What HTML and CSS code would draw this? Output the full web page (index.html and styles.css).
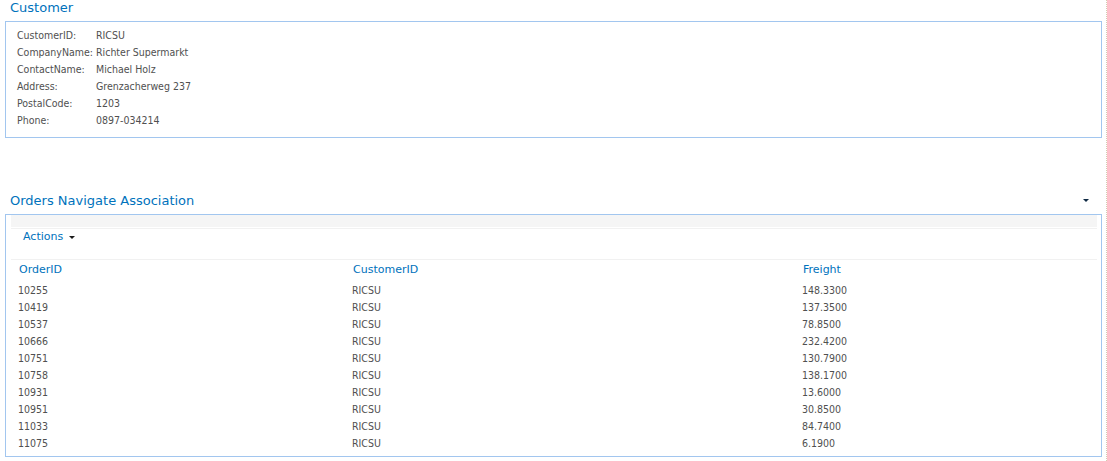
FILE: index.html
```html
<!DOCTYPE html>
<html>
<head>
<meta charset="utf-8">
<link rel="stylesheet" href="styles.css">
</head>
<body>
<div class="page">
  <div class="title">Customer</div>
  <div class="box details">
    <dl class="fields">
      <dt>CustomerID:</dt><dd>RICSU</dd>
      <dt>CompanyName:</dt><dd>Richter Supermarkt</dd>
      <dt>ContactName:</dt><dd>Michael Holz</dd>
      <dt>Address:</dt><dd>Grenzacherweg 237</dd>
      <dt>PostalCode:</dt><dd>1203</dd>
      <dt>Phone:</dt><dd>0897-034214</dd>
    </dl>
  </div>

  <div class="title title-orders">
    <span>Orders Navigate Association</span>
    <span class="caret dark"></span>
  </div>
  <div class="box orders">
    <div class="strip"></div>
    <div class="actions"><span>Actions</span><span class="caret"></span></div>
    <table class="grid">
      <colgroup><col class="c1"><col class="c2"><col class="c3"></colgroup>
      <thead>
        <tr><th>OrderID</th><th>CustomerID</th><th>Freight</th></tr>
      </thead>
      <tbody>
        <tr><td>10255</td><td>RICSU</td><td>148.3300</td></tr>
        <tr><td>10419</td><td>RICSU</td><td>137.3500</td></tr>
        <tr><td>10537</td><td>RICSU</td><td>78.8500</td></tr>
        <tr><td>10666</td><td>RICSU</td><td>232.4200</td></tr>
        <tr><td>10751</td><td>RICSU</td><td>130.7900</td></tr>
        <tr><td>10758</td><td>RICSU</td><td>138.1700</td></tr>
        <tr><td>10931</td><td>RICSU</td><td>13.6000</td></tr>
        <tr><td>10951</td><td>RICSU</td><td>30.8500</td></tr>
        <tr><td>11033</td><td>RICSU</td><td>84.7400</td></tr>
        <tr><td>11075</td><td>RICSU</td><td>6.1900</td></tr>
      </tbody>
    </table>
  </div>
</div>
</body>
</html>
```

FILE: styles.css
```css
html, body {
  margin: 0;
  padding: 0;
  background: #fff;
}
body {
  font-family: "DejaVu Sans Condensed", "DejaVu Sans", sans-serif;
  font-size: 10.5px;
  color: #505050;
}
.page {
  width: 1106px;
  min-height: 461px;
  border-right: 1px dotted #d5cbb0;
}
.title {
  font-family: "DejaVu Sans", sans-serif;
  font-size: 13px;
  color: #0072bc;
  height: 21px;
  line-height: 15px;
  padding-left: 10px;
}
.title-orders {
  margin-top: 55px;
  display: flex;
  justify-content: space-between;
  align-items: flex-start;
  padding-right: 17px;
}
.box {
  margin: 0 4px 0 5px;
  border: 1px solid #a2c6ef;
}
.details {
  padding: 5px 0 8px 11px;
}
.fields {
  margin: 0;
  display: grid;
  grid-template-columns: 79px 1fr;
  line-height: 17px;
}
.fields dt, .fields dd {
  margin: 0;
}
.caret {
  display: inline-block;
  width: 0;
  height: 0;
  border-left: 3px solid transparent;
  border-right: 3px solid transparent;
  border-top: 3px solid #1a1a1a;
}
.caret.dark {
  margin-top: 6px;
  border-top-color: #0f2a44;
}
.orders {
  padding: 0 4px 4px 5px;
}
.strip {
  height: 12px;
  background: #f5f5f5;
  margin-bottom: 1px;
}
.actions {
  border-top: 1px solid #f1f1f1;
  border-bottom: 1px solid #f1f1f1;
  height: 32px;
  box-sizing: border-box;
  padding-left: 12px;
  line-height: 15px;
  color: #0072bc;
  font-family: "DejaVu Sans", sans-serif;
  font-size: 11px;
  display: flex;
  align-items: flex-start;
  gap: 6px;
}
.actions .caret {
  margin-top: 7px;
}
.grid {
  width: 100%;
  table-layout: fixed;
  border-collapse: collapse;
}
.grid .c1 { width: 334px; }
.grid .c2 { width: 450px; }
.grid th {
  font-family: "DejaVu Sans", sans-serif;
  font-size: 11px;
  font-weight: normal;
  color: #0072bc;
  text-align: left;
  padding: 1px 0 4px 8px;
  line-height: 17px;
}
.grid td {
  padding: 0 0 0 7px;
  line-height: 17px;
  height: 17px;
}
```
